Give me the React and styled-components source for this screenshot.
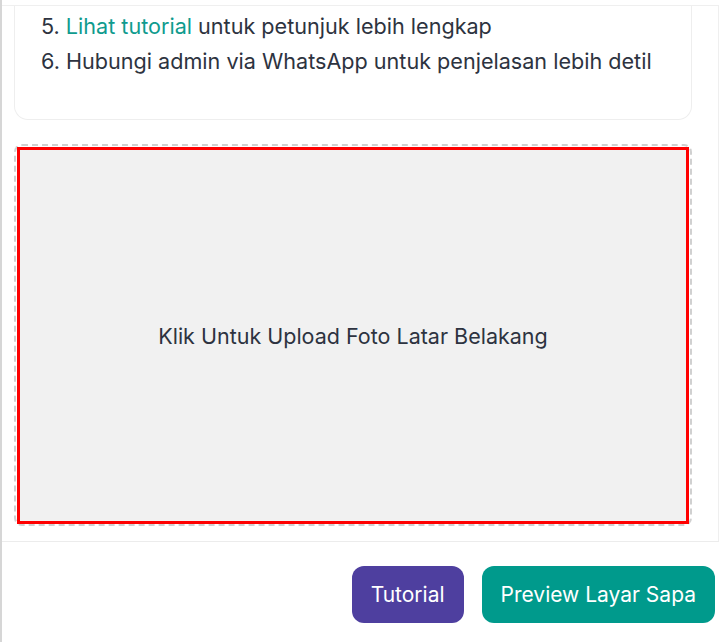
import React from "react";
import styled, { createGlobalStyle } from "styled-components";

const GlobalStyle = createGlobalStyle`
    html, body {
        margin: 0;
        padding: 0;
        background: #ffffff;
        font-family: Inter, "Noto Sans", sans-serif;
    }
`;

const Page = styled.div`
    width: 719px;
    height: 642px;
    box-sizing: border-box;
    border-left: 2px solid #d6d6d6;
    padding-top: 5px;
    display: flex;
    flex-direction: column;
    overflow: hidden;
`;

const Body = styled.div`
    border-top: 1px solid #efefef;
    border-right: 1px solid #efefef;
    padding: 0 26px 15px 12px;
    display: flex;
    flex-direction: column;
    gap: 24px;
`;

const Card = styled.div`
    border: 1px solid #eeeeee;
    border-top: none;
    border-radius: 0 0 14px 14px;
    padding: 6px 29px 43px 26px;
`;

const Steps = styled.ol`
    margin: 0;
    padding: 0;
    list-style: none;
    display: flex;
    flex-direction: column;
    gap: 6px;
`;

const Step = styled.li`
    font-size: 21.6px;
    line-height: 29px;
    color: #2d3340;
`;

const Link = styled.a`
    color: #0f9b8e;
    text-decoration: none;
`;

const Dropzone = styled.div`
    height: 382px;
    box-sizing: border-box;
    border: 2px dashed #d0d0d0;
    border-radius: 8px;
    padding: 1px 1px 0 1px;
    display: flex;
`;

const DropInner = styled.div`
    flex: 1;
    border: 3px solid #ff0000;
    background: #f1f1f1;
    display: flex;
    align-items: center;
    justify-content: center;
    font-size: 21.5px;
    color: #2d3340;
    cursor: pointer;
`;

const Footer = styled.div`
    border-top: 1px solid #ececec;
    display: flex;
    justify-content: flex-end;
    gap: 18px;
    padding: 24px 4px 0 0;
`;

const Button = styled.button`
    height: 57px;
    padding: 0 19px;
    border: none;
    border-radius: 12px;
    background: ${(p) => p.$bg};
    color: #ffffff;
    font-family: Inter, "Noto Sans", sans-serif;
    font-size: 21px;
    cursor: pointer;
`;

const App = () => {
    return (
        <>
            <GlobalStyle />
            <Page>
                <Body>
                    <Card>
                        <Steps>
                            <Step>5. <Link href="#">Lihat tutorial</Link> untuk petunjuk lebih lengkap</Step>
                            <Step>6. Hubungi admin via WhatsApp untuk penjelasan lebih detil</Step>
                        </Steps>
                    </Card>
                    <Dropzone>
                        <DropInner>Klik Untuk Upload Foto Latar Belakang</DropInner>
                    </Dropzone>
                </Body>
                <Footer>
                    <Button $bg="#4e3f9f">Tutorial</Button>
                    <Button $bg="#009a8c">Preview Layar Sapa</Button>
                </Footer>
            </Page>
        </>
    );
};

export default App;
